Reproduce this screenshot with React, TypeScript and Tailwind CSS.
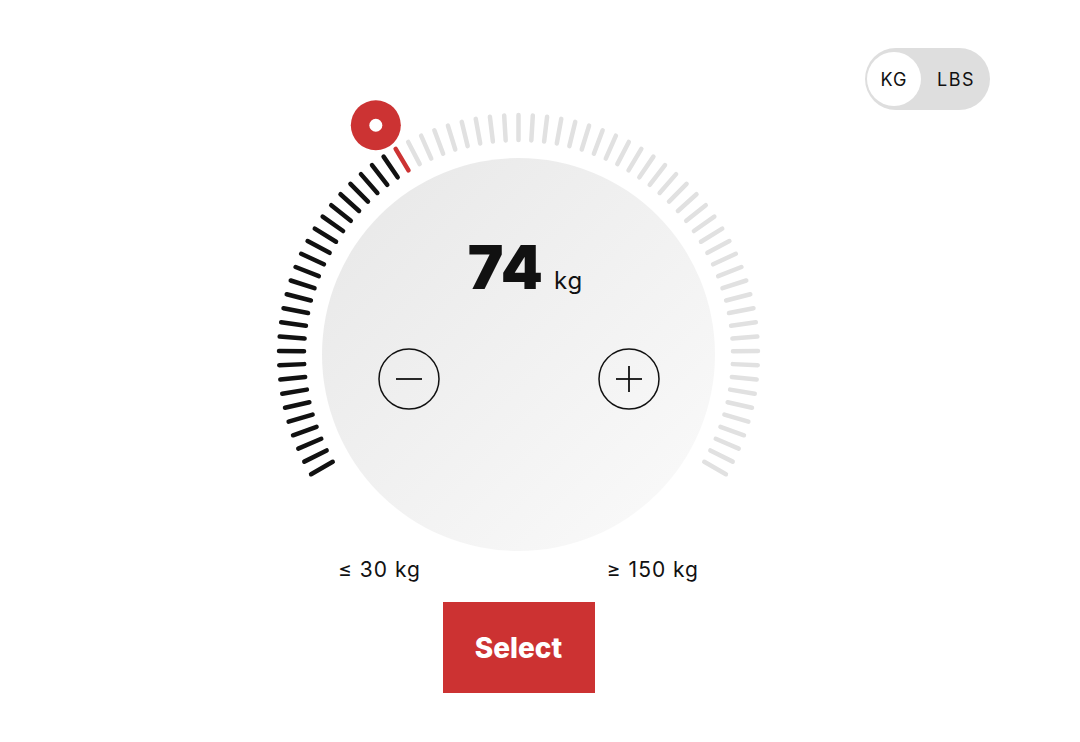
import React from "react";

const CX = 280.5;
const CY = 274.5;
const N = 70;
const ACTIVE = 26;

function Ticks() {
  const ticks = [];
  for (let i = 0; i <= N; i++) {
    const a = ((-120 + (i * 240) / N) * Math.PI) / 180;
    const r1 = 214.5;
    const r2 = 239.5;
    const color = i < ACTIVE ? "#111111" : i === ACTIVE ? "#cc3333" : "#e1e1e1";
    ticks.push(
      <line
        key={i}
        x1={CX + r1 * Math.sin(a)}
        y1={CY - r1 * Math.cos(a)}
        x2={CX + r2 * Math.sin(a)}
        y2={CY - r2 * Math.cos(a)}
        stroke={color}
        strokeWidth={4.5}
        strokeLinecap="round"
      />
    );
  }
  const ka = (-31.9 * Math.PI) / 180;
  const kx = CX + 270 * Math.sin(ka);
  const ky = CY - 270 * Math.cos(ka);
  return (
    <svg className="absolute left-0 top-0" width={561} height={480} viewBox="0 0 561 480">
      {ticks}
      <circle cx={kx} cy={ky} r={25} fill="#cc3333" />
      <circle cx={kx} cy={ky} r={6.5} fill="#ffffff" />
    </svg>
  );
}

function RoundBtn({ plus }: { plus?: boolean }) {
  return (
    <button className="w-[62px] h-[62px] flex items-center justify-center">
      <svg width={62} height={62} viewBox="0 0 62 62">
        <circle cx={31} cy={31} r={30} fill="none" stroke="#111" strokeWidth={1.5} />
        <line x1={18} y1={31} x2={44} y2={31} stroke="#111" strokeWidth={1.8} />
        {plus && <line x1={31} y1={18} x2={31} y2={44} stroke="#111" strokeWidth={1.8} />}
      </svg>
    </button>
  );
}

export default function App() {
  return (
    <div
      className="w-full h-[742px] bg-white flex items-start text-[#111]"
      style={{ fontFamily: "Inter, 'Noto Sans', sans-serif" }}
    >
      <div className="ml-[238px] w-[561px] pt-[80px] flex flex-col">
        <div className="relative h-[472px] w-[561px]">
          <Ticks />
          <div className="absolute left-[84px] top-[78px] w-[393px] h-[393px] rounded-full bg-linear-to-br from-[#e7e7e7] to-[#fbfbfb] flex flex-col items-center pt-[79px]">
            <div className="flex items-baseline pl-[14px]">
              <span className="text-[60px] leading-none font-black tracking-[1px]">74</span>
              <span className="text-[24px] leading-none ml-[10px] tracking-[1px]">kg</span>
            </div>
            <div className="flex gap-[158px] mt-[51px]">
              <RoundBtn />
              <RoundBtn plus />
            </div>
          </div>
        </div>
        <div className="flex justify-between px-[100px] mt-[6px] text-[21px] leading-[24px] tracking-[1px]">
          <span>≤ 30 kg</span>
          <span>≥ 150 kg</span>
        </div>
        <button className="self-center mt-[20px] w-[152px] h-[91px] bg-[#cc3232] text-white text-[28px] font-extrabold">
          Select
        </button>
      </div>
      <div className="ml-[66px] mt-[48px] w-[125px] h-[62px] rounded-full bg-[#dedede] flex items-center pl-[2px]">
        <div className="w-[54px] h-[54px] rounded-full bg-white flex items-center justify-center text-[18px] tracking-[1px]">
          KG
        </div>
        <span className="ml-[16px] text-[18px] tracking-[1.5px]">LBS</span>
      </div>
    </div>
  );
}
